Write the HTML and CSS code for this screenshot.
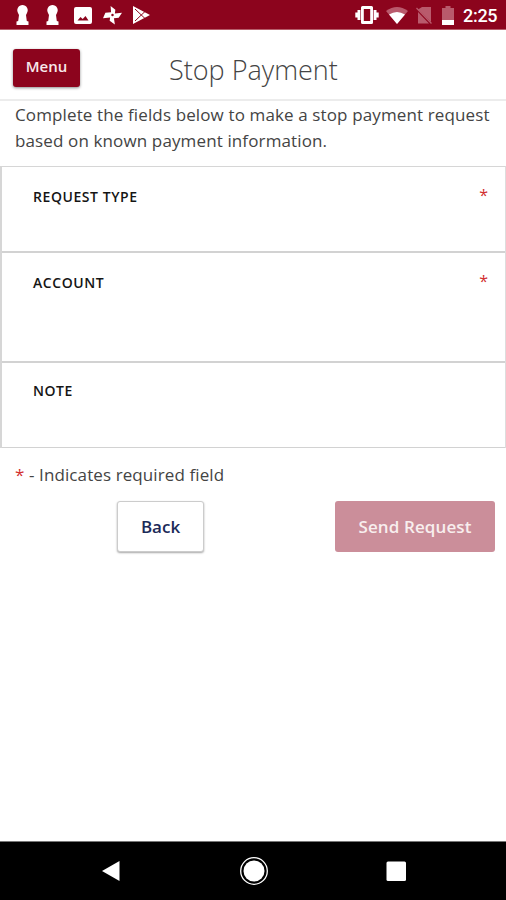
FILE: index.html
```html
<!DOCTYPE html>
<html lang="en">
<head>
<meta charset="utf-8">
<title>Stop Payment</title>
<link rel="stylesheet" href="styles.css">
</head>
<body>
<div class="screen">
  <div class="status">
    <div class="notifications">
      <svg class="keyhole" viewBox="0 0 14 20"><path d="M7 0a5.300 5.300 0 0 1 4.500 8L10.500 10l.8 6 1.700.5V20H1v-3.500l1.700-.5.800-6-1-2A5.300 5.300 0 0 1 7 0z"/></svg>
      <svg class="keyhole" viewBox="0 0 14 20"><path d="M7 0a5.300 5.300 0 0 1 4.500 8L10.500 10l.8 6 1.700.5V20H1v-3.500l1.700-.5.800-6-1-2A5.300 5.300 0 0 1 7 0z"/></svg>
      <svg class="photo" viewBox="0 0 18 17"><path fill-rule="evenodd" d="M2 0h14q2 0 2 2v13q0 2-2 2H2q-2 0-2-2V2q0-2 2-2zm1.500 13.500h11L11.500 9 8.700 12 6.500 10z"/></svg>
      <svg class="pinwheel" viewBox="0 0 20 20"><path fill-rule="evenodd" d="M8 .5l5 4-.5 4 7.500-1-3.500 5.500-5 .5 1 6.500-5.500-4 .5-3.500L0 13.500 2.500 7.500 8.500 7zM10 8.800a1.300 1.300 0 1 0 0 2.600 1.300 1.300 0 0 0 0-2.600z"/></svg>
      <svg class="play" viewBox="0 0 18 18"><path d="M1 0l17 9L1 18z"/><path class="cut" d="M3 3l10 9.500M3 15L13 5.500"/></svg>
    </div>
    <div class="system">
      <svg class="vibrate" viewBox="0 0 24 18"><path fill-rule="evenodd" d="M7.500 0h9Q18 0 18 1.500v15Q18 18 16.500 18h-9Q6 18 6 16.500v-15Q6 0 7.500 0zM8.800 3v12h6.400V3zM2.500 4h2.900v10H2.500zM18.600 4h2.900v10h-2.900zM.3 6.500h2.200v5H.3zM21.500 6.500h2.200v5h-2.200z"/></svg>
      <svg class="wifi" viewBox="0 0 22 17"><path class="faint" d="M11 17L0 4Q11-4 22 4z"/><path d="M11 17L3 7.500Q11 2.500 19 7.500z"/></svg>
      <svg class="sim" viewBox="0 0 16 17"><path class="faint" d="M6 0h9v15L2 2.500zM2 5l11 11.500H2z"/><path class="slash" d="M.5 1l15 15.500"/></svg>
      <svg class="battery" viewBox="0 0 12 19"><path class="faint" d="M3.500 0h5v2H12v12H0V2h3.500z"/><path d="M0 14h12v5H0z"/></svg>
      <span class="clock">2:25</span>
    </div>
  </div>
  <header class="header">
    <button class="menu">Menu</button>
    <h1>Stop Payment</h1>
  </header>
  <main>
    <p class="intro">Complete the fields below to make a stop payment request<br>based on known payment information.</p>
    <section class="fields">
      <div class="field type"><span>REQUEST TYPE</span><b>*</b></div>
      <div class="field account"><span>ACCOUNT</span><b>*</b></div>
      <div class="field note"><span>NOTE</span></div>
    </section>
    <p class="required"><b>*</b> - Indicates required field</p>
    <div class="actions">
      <button class="back">Back</button>
      <button class="send">Send Request</button>
    </div>
  </main>
  <nav class="navbar">
    <svg viewBox="0 0 30 30"><path d="M6 15L23.500 5v20z"/></svg>
    <svg viewBox="0 0 30 30"><circle class="ring" cx="15" cy="15" r="13.300"/><circle cx="15" cy="15" r="10.500"/></svg>
    <svg viewBox="0 0 30 30"><rect x="5.500" y="5.500" width="19.500" height="19.500" rx="1.500"/></svg>
  </nav>
</div>
</body>
</html>
```
FILE: styles.css
```css
* { box-sizing: border-box; }
body { margin: 0; background: #fff; font-family: "Open Sans", "Noto Sans", sans-serif; }
h1, p { margin: 0; }
button { font-family: inherit; padding: 0; }
svg { display: block; flex: none; fill: #fff; }
.screen { width: 506px; height: 900px; display: flex; flex-direction: column; overflow: hidden; }

.status { height: 30px; flex: none; display: flex; justify-content: space-between; padding: 1px 10px 0 15px; background: #8c041d; border-bottom: 1px solid #b65c69; }
.notifications, .system { display: flex; align-items: center; }
.keyhole { width: 15px; height: 20px; margin-right: 15px; }
.photo { width: 18px; height: 17px; margin-left: -1px; margin-right: 11px; }
.pinwheel { width: 19px; height: 20px; margin-right: 10px; }
.play { width: 18px; height: 18px; }
.cut { fill: none; stroke: #8c041d; stroke-width: 1; }
.vibrate { width: 24px; height: 18px; margin-right: 7px; }
.wifi { width: 22px; height: 17px; margin-right: 8px; }
.sim { width: 16px; height: 17px; margin-right: 10px; }
.battery { width: 12px; height: 19px; margin-right: 9px; }
.faint { fill: #b95a6c; }
.slash { fill: none; stroke: #b95a6c; stroke-width: 1.3; }
.clock { width: 33px; font: 500 18px/29px Roboto, sans-serif; letter-spacing: -0.3px; color: #fff; white-space: nowrap; padding-top: 1px; }

.header { height: 71px; flex: none; display: grid; grid-template-columns: 80px 1fr 80px; align-items: center; border-bottom: 2px solid #ececec; padding-top: 6px; }
.menu { width: 67px; height: 38px; margin-left: 13px; padding-bottom: 3px; border: 0; border-radius: 3px; background: #8c041d; color: #f8e9eb; font-size: 15px; font-weight: 600; box-shadow: 0 1px 3px rgba(0,0,0,.45); }
h1 { width: 170px; margin-left: 89px; padding-top: 4px; font-size: 27px; line-height: 36px; font-weight: 300; color: #444; white-space: nowrap; }

.intro { height: 65px; padding: 1px 15px 0; font-size: 17px; line-height: 26px; letter-spacing: .125px; color: #444; white-space: nowrap; }
.fields { border-left: 2px solid #d6d6d6; border-right: 1px solid #ddd; border-top: 1px solid #d6d6d6; }
.field { display: flex; justify-content: space-between; padding: 20px 17px 0 31px; border-bottom: 2px solid #d2d2d2; font-size: 14px; line-height: 20px; letter-spacing: .57px; font-weight: 600; color: #151515; }
.type { height: 86px; }
.account { height: 110px; }
.note { height: 85px; padding-top: 18px; border-bottom-width: 1px; }
b { color: #d22f2f; font-weight: 400; }
.field b { font-size: 16px; line-height: 17px; letter-spacing: 0; }
.required { padding: 14px 15px 0; font-size: 17px; line-height: 26px; letter-spacing: .1px; color: #444; white-space: nowrap; }
.actions { display: flex; justify-content: space-between; padding: 13px 11px 0 117px; }
.back, .send { height: 51px; font-size: 17px; font-weight: 600; border-radius: 3px; }
.back { width: 87px; border: 1px solid #ccc; background: #fff; color: #1b2a58; box-shadow: 0 1px 2px rgba(0,0,0,.35); }
.send { width: 160px; border: 0; background: #cb8e9a; color: #f8eeee; letter-spacing: .1px; }

.navbar { height: 59px; margin-top: auto; flex: none; display: flex; justify-content: space-between; padding: 14px 95px 0 96px; background: #000; border-top: 1px solid #777; }
.navbar svg { width: 30px; height: 30px; }
.navbar .ring { fill: none; stroke: #fff; stroke-width: 1.300; }
```
